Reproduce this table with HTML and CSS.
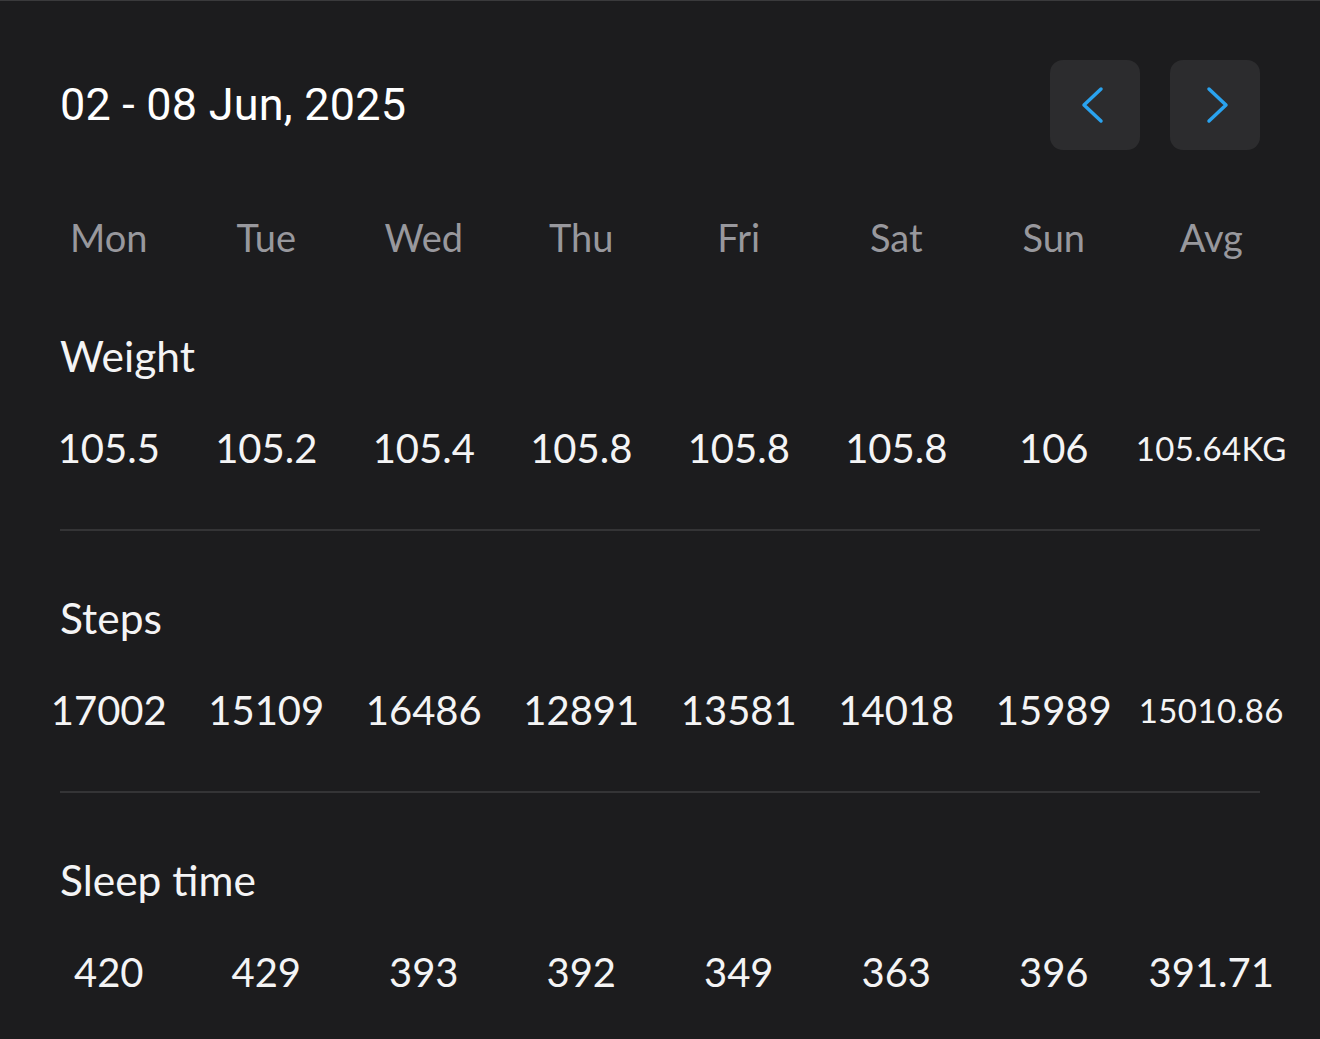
FILE: index.html
```html
<!DOCTYPE html>
<html lang="en">
<head>
<meta charset="utf-8">
<title>Weekly summary</title>
<link rel="stylesheet" href="styles.css">
</head>
<body>
<div class="page">
  <header class="header">
    <h1 class="title">02 - 08 Jun, 2025</h1>
    <div class="nav">
      <button class="nav-btn" aria-label="Previous week">
        <svg viewBox="0 0 90 90" width="90" height="90"><path d="M51 29 L34 45 L51 61" /></svg>
      </button>
      <button class="nav-btn" aria-label="Next week">
        <svg viewBox="0 0 90 90" width="90" height="90"><path d="M39 29 L56 45 L39 61" /></svg>
      </button>
    </div>
  </header>

  <div class="grid days">
    <span>Mon</span><span>Tue</span><span>Wed</span><span>Thu</span><span>Fri</span><span>Sat</span><span>Sun</span><span>Avg</span>
  </div>

  <section class="section first">
    <div class="label">Weight</div>
    <div class="grid values">
      <span>105.5</span><span>105.2</span><span>105.4</span><span>105.8</span><span>105.8</span><span>105.8</span><span>106</span><span class="avg-small">105.64KG</span>
    </div>
    <div class="divider"></div>
  </section>

  <section class="section">
    <div class="label">Steps</div>
    <div class="grid values">
      <span>17002</span><span>15109</span><span>16486</span><span>12891</span><span>13581</span><span>14018</span><span>15989</span><span class="avg-small">15010.86</span>
    </div>
    <div class="divider"></div>
  </section>

  <section class="section">
    <div class="label">Sleep time</div>
    <div class="grid values">
      <span>420</span><span>429</span><span>393</span><span>392</span><span>349</span><span>363</span><span>396</span><span>391.71</span>
    </div>
  </section>
</div>
</body>
</html>
```
FILE: styles.css
```css
html, body {
  margin: 0;
  padding: 0;
  background: #1c1c1e;
}

body {
  border-top: 1px solid #3a3a3c;
  font-family: "Lato", "Open Sans", sans-serif;
  color: #f4f4f5;
}

.page {
  padding: 59px 60px 0;
}

.header {
  display: flex;
  justify-content: space-between;
  align-items: center;
  height: 90px;
}

.title {
  margin: 0;
  font-family: "Roboto", "Inter", sans-serif;
  font-weight: 400;
  font-size: 45px;
  line-height: 50px;
  color: #ffffff;
  letter-spacing: 0.2px;
}

.nav {
  display: flex;
  gap: 30px;
}

.nav-btn {
  width: 90px;
  height: 90px;
  padding: 0;
  border: none;
  border-radius: 13px;
  background: #2c2c2e;
  display: flex;
  align-items: center;
  justify-content: center;
}

.nav-btn svg {
  display: block;
}

.nav-btn path {
  fill: none;
  stroke: #2aa3ef;
  stroke-width: 3.5;
  stroke-linecap: round;
  stroke-linejoin: round;
}

.grid {
  display: grid;
  grid-template-columns: repeat(8, 1fr);
  margin: 0 -30px;
  text-align: center;
  white-space: nowrap;
}

.days {
  margin-top: 62px;
  height: 50px;
  font-size: 38px;
  line-height: 50px;
  color: #98989d;
}

.section {
  padding-top: 63px;
}

.section.first {
  padding-top: 70px;
}

.label {
  height: 50px;
  font-size: 42.5px;
  line-height: 48px;
  color: #f4f4f5;
}

.values {
  margin-top: 42px;
  height: 50px;
  font-size: 40px;
  line-height: 48px;
}

.avg-small {
  font-size: 33px;
  letter-spacing: 0.4px;
}

.divider {
  margin-top: 55px;
  height: 2px;
  background: #343436;
}
```
